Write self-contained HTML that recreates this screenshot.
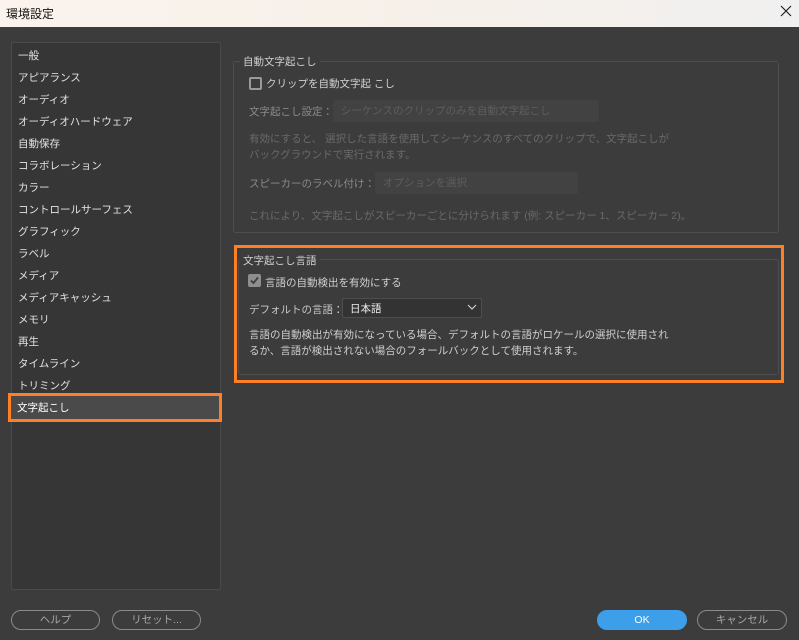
<!DOCTYPE html>
<html><head><meta charset="utf-8"><style>
*{box-sizing:border-box;margin:0;padding:0}
body{width:799px;height:640px;background:#3c3c3c;font-family:"Liberation Sans","Noto Sans CJK JP",sans-serif;font-size:10.5px;color:#d6d6d6;position:relative;overflow:hidden}
.a{position:absolute;white-space:nowrap}
.title{left:0;top:0;width:799px;height:27px;background:linear-gradient(90deg,#fbf3ec,#f6f0ea 60%,#f0f0f0);color:#111;font-size:12px;padding:5px 0 0 6px}
.list{left:11px;top:42px;width:210px;height:548px;background:#363636;border:1px solid #4a4a4a;border-radius:2px}
.item{position:absolute;left:6px;color:#e2e2e2}
.grp{border:1px solid #4e4e4e;border-radius:3px}
.leg{background:#3c3c3c;padding:0 3px;color:#cfcfcf}
.dim{color:#6a6a6a}
.sel{background:#424242;border-radius:2px;color:#5e5e5e;padding:3px 8px}
.btn{border:1px solid #8a8a8a;border-radius:10px;height:20px;color:#a8a8a8;text-align:center;line-height:18px}
</style></head><body>
<div class="a title">環境設定</div>
<svg class="a" style="left:780px;top:5px" width="12" height="12"><path d="M1 1L11 11M11 1L1 11" stroke="#222" stroke-width="1.2"/></svg>
<div class="a list">
<div class="item" style="top:5px">一般</div>
<div class="item" style="top:27px">アピアランス</div>
<div class="item" style="top:49px">オーディオ</div>
<div class="item" style="top:71px">オーディオハードウェア</div>
<div class="item" style="top:93px">自動保存</div>
<div class="item" style="top:115px">コラボレーション</div>
<div class="item" style="top:137px">カラー</div>
<div class="item" style="top:159px">コントロールサーフェス</div>
<div class="item" style="top:181px">グラフィック</div>
<div class="item" style="top:203px">ラベル</div>
<div class="item" style="top:225px">メディア</div>
<div class="item" style="top:247px">メディアキャッシュ</div>
<div class="item" style="top:269px">メモリ</div>
<div class="item" style="top:291px">再生</div>
<div class="item" style="top:313px">タイムライン</div>
<div class="item" style="top:335px">トリミング</div>
</div>
<div class="a" style="left:10px;top:395px;width:210px;height:25px;background:#4a4a4a"></div>
<div class="a" style="left:8px;top:393px;width:214px;height:29px;border:3px solid #ff7f27"></div>
<div class="a" style="left:17px;top:400px;color:#fff">文字起こし</div>

<div class="a grp" style="left:233px;top:61px;width:546px;height:172px"></div>
<div class="a leg" style="left:240px;top:54px">自動文字起こし</div>
<div class="a" style="left:249px;top:77px;width:13px;height:13px;border:2px solid #9a9a9a;border-radius:2px"></div>
<div class="a" style="left:266px;top:76px;color:#d0d0d0">クリップを自動文字起 こし</div>
<div class="a" style="left:249px;top:104px;color:#8a8a8a">文字起こし設定：</div>
<div class="a sel" style="left:333px;top:100px;width:266px;height:22px">シーケンスのクリップのみを自動文字起こし</div>
<div class="a dim" style="left:249px;top:131px;line-height:16px">有効にすると、 選択した言語を使用してシーケンスのすべてのクリップで、文字起こしが<br>バックグラウンドで実行されます。</div>
<div class="a" style="left:249px;top:176px;color:#8a8a8a">スピーカーのラベル付け：</div>
<div class="a sel" style="left:375px;top:172px;width:203px;height:22px">オプションを選択</div>
<div class="a dim" style="left:249px;top:208px">これにより、文字起こしがスピーカーごとに分けられます (例: スピーカー 1、スピーカー 2)。</div>

<div class="a grp" style="left:238px;top:259px;width:541px;height:116px"></div>
<div class="a leg" style="left:240px;top:253px">文字起こし言語</div>
<div class="a" style="left:248px;top:274px;width:13px;height:13px;background:#8e8e8e;border-radius:2px"></div>
<svg class="a" style="left:248px;top:274px" width="13" height="13"><path d="M3 6.5L5.5 9L10 3.5" stroke="#3c3c3c" stroke-width="1.8" fill="none"/></svg>
<div class="a" style="left:265px;top:275px;color:#d0d0d0">言語の自動検出を有効にする</div>
<div class="a" style="left:249px;top:302px;color:#c8c8c8">デフォルトの言語：</div>
<div class="a" style="left:342px;top:298px;width:140px;height:20px;background:#333;border:1px solid #4e4e4e;border-radius:2px;color:#eee;padding:2px 7px">日本語</div>
<svg class="a" style="left:467px;top:304px" width="10" height="7"><path d="M1 1L5 5L9 1" stroke="#ccc" stroke-width="1.2" fill="none"/></svg>
<div class="a" style="left:249px;top:327px;line-height:16px;color:#cfcfcf">言語の自動検出が有効になっている場合、デフォルトの言語がロケールの選択に使用され<br>るか、言語が検出されない場合のフォールバックとして使用されます。</div>
<div class="a" style="left:234px;top:245px;width:550px;height:138px;border:3px solid #ff7f27"></div>

<div class="a btn" style="left:11px;top:610px;width:89px">ヘルプ</div>
<div class="a btn" style="left:112px;top:610px;width:89px">リセット...</div>
<div class="a btn" style="left:597px;top:610px;width:90px;background:#3d9eea;border-color:#3d9eea;color:#fff">OK</div>
<div class="a btn" style="left:697px;top:610px;width:90px">キャンセル</div>
</body></html>
